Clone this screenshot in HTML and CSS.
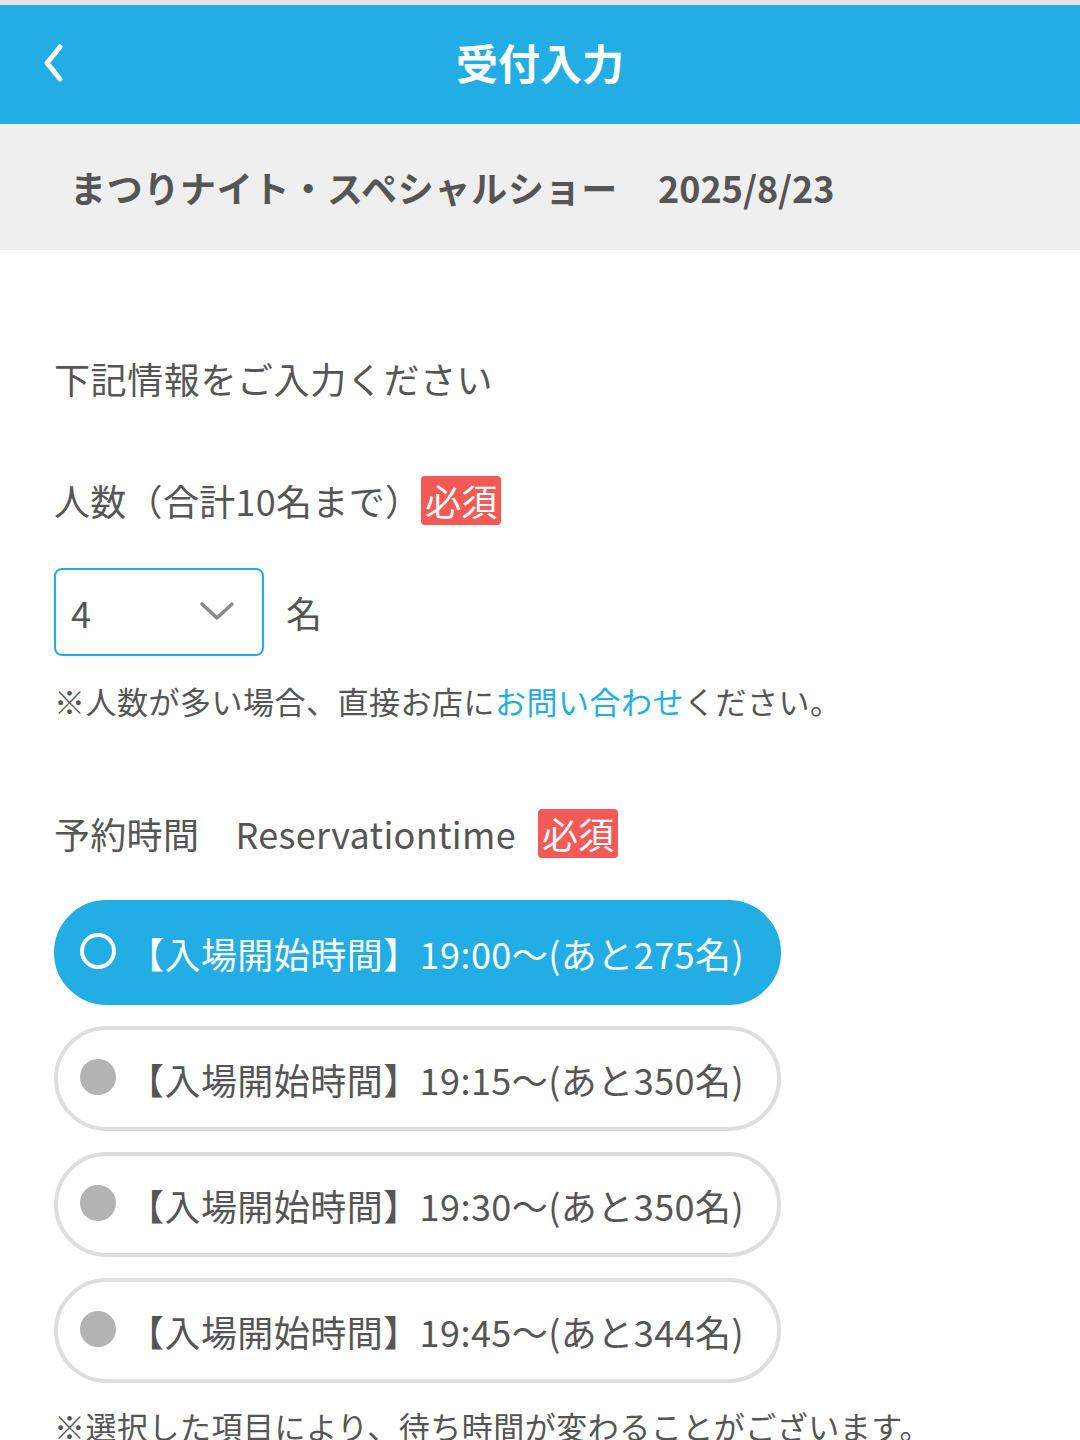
FILE: index.html
```html
<!DOCTYPE html>
<html lang="ja">
<head>
<meta charset="utf-8">
<title>受付入力</title>
<link rel="stylesheet" href="styles.css">
</head>
<body>
<div class="topstrip"></div>
<header class="appbar">
  <button class="back" aria-label="戻る">
    <svg width="26" height="40" viewBox="0 0 26 40"><path d="M20 4 L7 20 L20 36" fill="none" stroke="#fff" stroke-width="5" stroke-linecap="round" stroke-linejoin="round"/></svg>
  </button>
  <h1 class="title">受付入力</h1>
</header>
<section class="event">
  <span class="event-name">まつりナイト・スペシャルショー</span><span class="event-date">2025/8/23</span>
</section>
<main class="content">
  <p class="lead">下記情報をご入力ください</p>

  <div class="label-row label-count">
    <span class="label">人数（合計10名まで）</span><span class="req">必須</span>
  </div>
  <div class="count-row">
    <div class="select">
      <span class="select-value">4</span>
      <svg class="select-arrow" width="36" height="22" viewBox="0 0 36 22"><path d="M3 4 L18 18 L33 4" fill="none" stroke="#8a8a8a" stroke-width="3.5" stroke-linecap="round" stroke-linejoin="round"/></svg>
    </div>
    <span class="unit">名</span>
  </div>
  <p class="note">※人数が多い場合、直接お店に<a class="link" href="#">お問い合わせ</a>ください。</p>

  <div class="label-row label-time">
    <span class="label">予約時間　Reservationtime</span><span class="req">必須</span>
  </div>
  <div class="options">
    <div class="option selected"><span class="radio"></span><span class="opt-text">【入場開始時間】19:00〜(あと275名)</span></div>
    <div class="option"><span class="radio"></span><span class="opt-text">【入場開始時間】19:15〜(あと350名)</span></div>
    <div class="option"><span class="radio"></span><span class="opt-text">【入場開始時間】19:30〜(あと350名)</span></div>
    <div class="option"><span class="radio"></span><span class="opt-text">【入場開始時間】19:45〜(あと344名)</span></div>
  </div>
  <p class="note note-bottom">※選択した項目により、待ち時間が変わることがございます。</p>
</main>
</body>
</html>
```
FILE: styles.css
```css
* { box-sizing: border-box; }
html, body { margin: 0; padding: 0; }
body {
  width: 1080px;
  height: 1440px;
  overflow: hidden;
  background: #fff;
  color: #555;
  font-family: "Noto Sans CJK JP", "Noto Sans", sans-serif;
}
.topstrip { height: 5px; background: #e3e3e3; }
.appbar {
  height: 119px;
  background: #22aee4;
  display: flex;
  align-items: center;
  justify-content: center;
  position: relative;
}
.back {
  position: absolute;
  left: 40px;
  top: 38px;
  background: none;
  border: 0;
  padding: 0;
  width: 26px;
  height: 40px;
  display: flex;
}
.title {
  margin: 0;
  color: #fff;
  font-size: 42px;
  font-weight: 700;
  line-height: 1;
  position: relative;
  top: -3px;
}
.event {
  height: 126px;
  background: #efefef;
  display: flex;
  align-items: center;
  padding-left: 70px;
  font-size: 36px;
  font-weight: 700;
  color: #555;
}
.event-name { letter-spacing: 0.7px; }
.event-date { margin-left: 40px; }
.content { padding: 0 0 0 54px; }
.lead {
  margin: 103px 0 0;
  font-size: 36px;
  line-height: 50px;
  letter-spacing: 0.6px;
}
.label-row {
  display: flex;
  align-items: center;
}
.label-count { margin-top: 72px; }
.label { font-size: 36px; line-height: 50px; letter-spacing: 0.3px; }
.req {
  display: inline-block;
  background: #f45a55;
  color: #fff;
  font-size: 36px;
  line-height: 49px;
  height: 49px;
  padding: 0 4px;
  border-radius: 4px;
  margin-left: 22px;
}
.label-count .req { margin-left: 0; }
.count-row {
  display: flex;
  align-items: center;
  margin-top: 43px;
}
.select {
  width: 210px;
  height: 88px;
  border: 2px solid #22aee4;
  border-radius: 8px;
  display: flex;
  align-items: center;
  justify-content: space-between;
  padding: 0 27px 0 15px;
}
.select-value { font-size: 36px; line-height: 1; }
.select-arrow { margin-top: -2px; }
.unit { font-size: 36px; margin-left: 22px; }
.note {
  margin: 20px 0 0;
  font-size: 31px;
  line-height: 50px;
  letter-spacing: 0.5px;
}
.link { color: #22aee4; text-decoration: none; }
.label-time { margin-top: 82px; }
.options {
  margin-top: 42px;
  display: flex;
  flex-direction: column;
  gap: 21px;
}
.option {
  width: 727px;
  height: 105px;
  border-radius: 53px;
  border: 4px solid #dedede;
  background: #fff;
  display: flex;
  align-items: center;
  padding-left: 22px;
  color: #555;
}
.option.selected {
  background: #22aee4;
  border-color: #22aee4;
  color: #fff;
}
.radio {
  width: 36px;
  height: 36px;
  border-radius: 50%;
  background: #b3b3b3;
  flex: none;
  margin-top: -4px;
}
.option.selected .radio {
  background: transparent;
  border: 4px solid #fff;
}
.opt-text {
  font-size: 36px;
  line-height: 1;
  margin-left: 12px;
  letter-spacing: 0.45px;
}
.note-bottom { margin-top: 18px; }
```
